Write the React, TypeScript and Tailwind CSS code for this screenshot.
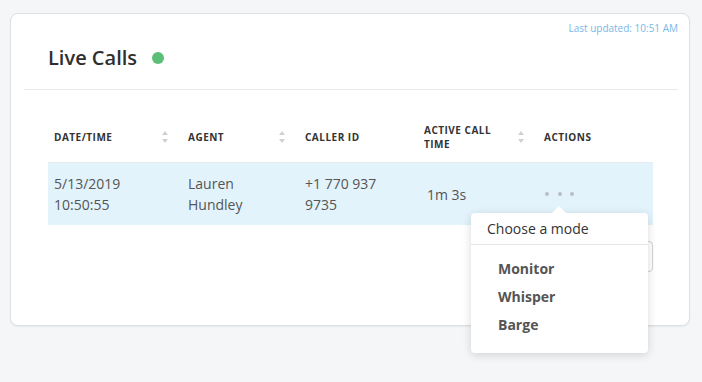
import React from "react";

const SortIcon = () => (
  <div className="flex flex-col items-center gap-[4px] mr-[20px]">
    <div className="w-0 h-0 border-x-[3.5px] border-x-transparent border-b-[4px] border-b-[#cdd1d6]" />
    <div className="w-0 h-0 border-x-[3.5px] border-x-transparent border-t-[4px] border-t-[#cdd1d6]" />
  </div>
);

export default function App() {
  const font = { fontFamily: '"Open Sans", "Liberation Sans", sans-serif' };
  return (
    <div className="w-[702px] h-[382px] bg-[#f5f6f8] pt-[13px] pl-[10px]" style={font}>
      <div className="relative w-[680px] h-[313px] rounded-[8px] border border-[#dde1e6] bg-white shadow-[0_1px_2px_rgba(0,0,0,0.06)]">
        <div className="text-right pr-[11px] pt-[7px] text-[10px] leading-[14px] text-[#78b8e6]">
          Last updated: 10:51 AM
        </div>
        <div className="mt-[9px] pl-[37px] flex items-center gap-[15px]">
          <span className="text-[20px] leading-[28px] font-semibold text-[#2f2f2f]">Live Calls</span>
          <span className="w-[12px] h-[12px] rounded-full bg-[#5cbf78]" />
        </div>
        <div className="mt-[17px] ml-[13px] mr-[11px] h-px bg-[#e6e8eb]" />

        <div className="mt-[22px] ml-[37px] mr-[36px]">
          <div className="grid grid-cols-[134px_117px_119px_120px_1fr] h-[51px] items-center pl-[6px] border-b border-[#e8eaed] text-[10px] leading-[14px] font-bold tracking-[0.5px] text-[#333]">
            <div className="flex items-center justify-between">
              <span>DATE/TIME</span>
              <SortIcon />
            </div>
            <div className="flex items-center justify-between">
              <span>AGENT</span>
              <SortIcon />
            </div>
            <div>CALLER ID</div>
            <div className="flex items-center justify-between">
              <span>
                ACTIVE CALL
                <br />
                TIME
              </span>
              <SortIcon />
            </div>
            <div>ACTIONS</div>
          </div>
          <div className="grid grid-cols-[134px_117px_119px_120px_1fr] h-[62px] items-center pl-[6px] bg-[#e2f3fc] text-[14px] leading-[21px] text-[#555]">
            <div>
              5/13/2019
              <br />
              10:50:55
            </div>
            <div>
              Lauren
              <br />
              Hundley
            </div>
            <div>
              +1 770 937
              <br />
              9735
            </div>
            <div className="pl-[3px]">1m 3s</div>
            <div className="flex items-center gap-[8.5px] pl-[1px]">
              <span className="w-[4px] h-[4px] rounded-full bg-[#b9bec5]" />
              <span className="w-[4px] h-[4px] rounded-full bg-[#b9bec5]" />
              <span className="w-[4px] h-[4px] rounded-full bg-[#b9bec5]" />
            </div>
          </div>
          <div className="mt-[16px] flex justify-end">
            <div className="w-[120px] h-[31px] rounded-[4px] border border-[#cfd3d8] bg-white" />
          </div>
        </div>

        <div className="absolute left-[460px] top-[199px] w-[177px] h-[140px] bg-white rounded-[4px] shadow-[0_2px_10px_rgba(0,0,0,0.15)]">
          <div className="absolute -top-[7px] left-[81px] w-0 h-0 border-x-[7px] border-x-transparent border-b-[7px] border-b-white" />
          <div className="pt-[6px] pb-[5px] pl-[16px] text-[14px] leading-[20px] text-[#333] border-b border-[#e3e5e8]">
            Choose a mode
          </div>
          <div className="pt-[10px] pl-[27px] text-[14px] leading-[28px] font-bold text-[#555]">
            <div>Monitor</div>
            <div>Whisper</div>
            <div>Barge</div>
          </div>
        </div>
      </div>
    </div>
  );
}
